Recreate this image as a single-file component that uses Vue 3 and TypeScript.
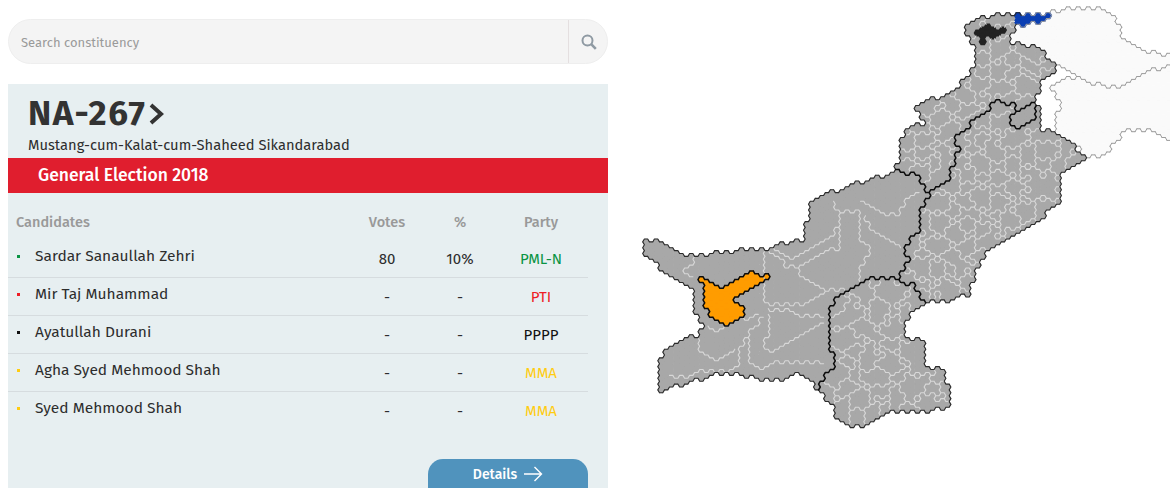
<template>
  <div class="page">
    <section class="left">
      <div class="search">
        <input class="search-input" placeholder="Search constituency" />
        <button class="search-btn" aria-label="Search">
          <svg width="16" height="16" viewBox="0 0 16 16" fill="none" stroke="#8f9aa3" stroke-width="2">
            <circle cx="6.5" cy="6.5" r="5" />
            <path d="M10.2 10.2 14.8 14.8" stroke-width="2.6" />
          </svg>
        </button>
      </div>

      <div class="panel">
        <h1 class="title">
          <span class="code">NA-267</span>
          <svg class="chev" width="15" height="22" viewBox="0 0 15 22" fill="none" stroke="#333" stroke-width="4">
            <path d="M2 2 12 11 2 20" />
          </svg>
        </h1>
        <p class="subtitle">Mustang-cum-Kalat-cum-Shaheed Sikandarabad</p>
        <div class="band">General Election 2018</div>

        <div class="row head">
          <span class="cand">Candidates</span>
          <span>Votes</span>
          <span>%</span>
          <span>Party</span>
        </div>
        <div class="rows">
          <div v-for="c in candidates" :key="c.name" class="row body">
            <span class="cand name">
              <i class="dot" :style="{ background: c.color }"></i>{{ c.name }}
            </span>
            <span>{{ c.votes }}</span>
            <span>{{ c.pct }}</span>
            <span :style="{ color: c.color }">{{ c.party }}</span>
          </div>
        </div>

        <div class="actions">
          <button class="details">
            Details
            <svg width="20" height="16" viewBox="0 0 20 16" fill="none" stroke="#fff" stroke-width="1.4">
              <path d="M1 8H18.5M11.5 1 18.5 8 11.5 15" />
            </svg>
          </button>
        </div>
      </div>
    </section>

    <svg class="map" viewBox="608 0 562 488" width="562" height="488">
      <path v-for="f in map.fills" :key="f.color" :d="f.d" :fill="f.color" :stroke="f.color" :stroke-width="f.sw" />
      <path :d="map.white" class="ln" stroke="#d8d8d8" stroke-width="1.1" />
      <path :d="map.grey" class="ln" stroke="#9c9c9c" stroke-width="1" />
      <path :d="map.dark" class="ln" stroke="#2b2b2b" stroke-width="1.1" />
      <path :d="map.black" class="ln" stroke="#0c0c0c" stroke-width="1.5" />
    </svg>
  </div>
</template>

<script setup lang="ts">
type Pt = [number, number];

const candidates = [
  { name: 'Sardar Sanaullah Zehri', votes: '80', pct: '10%', party: 'PML-N', color: '#0a9444' },
  { name: 'Mir Taj Muhammad', votes: '-', pct: '-', party: 'PTI', color: '#ee1c25' },
  { name: 'Ayatullah Durani', votes: '-', pct: '-', party: 'PPPP', color: '#111111' },
  { name: 'Agha Syed Mehmood Shah', votes: '-', pct: '-', party: 'MMA', color: '#ffcc11' },
  { name: 'Syed Mehmood Shah', votes: '-', pct: '-', party: 'MMA', color: '#ffcc11' },
];

// coarse province shapes in page coordinates, snapped to the hex grid below
const provinces: Pt[][] = [
  [[641,236],[648,238],[687,256],[767,248],[803,240],[807,223],[812,203],[830,193],[857,183],[897,172],[920,173],[923,190],[932,192],[920,213],[920,230],[905,245],[908,262],[898,277],[873,277],[840,293],[827,313],[830,347],[838,360],[817,388],[803,373],[773,382],[747,377],[723,373],[697,380],[660,392],[657,362],[663,352],[700,333],[707,325],[695,315],[693,290],[663,273],[643,250]],
  [[897,172],[898,143],[905,130],[925,123],[915,107],[928,98],[940,102],[953,90],[975,68],[975,47],[963,33],[970,23],[997,13],[1018,13],[1020,23],[1013,30],[1008,42],[1023,43],[1043,52],[1057,67],[1053,75],[1042,83],[1035,100],[1033,102],[1015,110],[1013,103],[997,102],[980,115],[953,140],[960,147],[948,180],[932,192],[923,190],[920,173]],
  [[932,192],[948,180],[960,147],[953,140],[980,115],[997,102],[1013,103],[1015,110],[1008,115],[1008,123],[1017,128],[1035,118],[1033,102],[1040,105],[1042,132],[1050,130],[1073,143],[1085,157],[1063,170],[1063,197],[1052,207],[1040,220],[1010,235],[985,255],[975,275],[970,295],[950,300],[927,303],[913,285],[898,282],[898,277],[908,262],[905,245],[920,230],[920,213]],
  [[1015,110],[1033,102],[1035,118],[1017,128],[1008,123],[1008,115]],
  [[898,277],[898,282],[913,285],[925,303],[905,320],[905,337],[925,342],[925,368],[942,370],[953,397],[952,407],[917,413],[883,413],[863,427],[850,425],[837,417],[830,402],[817,388],[838,360],[830,347],[827,313],[840,293],[873,277]],
  [[1020,23],[1018,13],[1047,13],[1070,7],[1093,7],[1118,20],[1120,40],[1150,52],[1175,55],[1175,63],[1147,72],[1117,88],[1097,85],[1080,75],[1063,65],[1057,67],[1043,52],[1023,43],[1008,42],[1013,30]],
  [[1175,64],[1147,72],[1117,88],[1097,85],[1080,78],[1063,78],[1053,88],[1057,100],[1063,103],[1058,110],[1058,132],[1075,143],[1085,158],[1107,155],[1120,135],[1138,127],[1175,142]],
];
const orange: Pt[] = [[695,275],[720,288],[747,273],[769,276],[758,286],[733,298],[747,315],[725,329],[708,312],[702,300],[702,282]];
const blue: Pt[] = [[1017,9],[1050,9],[1050,19],[1036,22],[1028,27],[1017,27]];
const blackArea: Pt[] = [[974,32],[990,25],[1008,31],[998,36],[988,37],[985,46],[981,46],[978,37]];

// Balochistan seat borders, traced by eye and walked along the hex lattice
const balochLines: Pt[][] = [
  [[695,277],[685,270],[695,258],[713,253]],
  [[763,250],[767,270],[767,303],[777,305],[803,303],[827,287],[850,290]],
  [[767,250],[787,270],[800,267],[843,250],[843,213],[860,210],[863,243],[872,250],[860,270],[853,290]],
  [[800,267],[800,280],[827,287]],
  [[832,200],[838,213],[830,240],[793,260],[767,250]],
  [[860,202],[903,213],[907,200],[920,192]],
  [[867,213],[873,233],[903,245]],
  [[767,310],[787,310],[827,317]],
  [[767,313],[763,343],[762,350],[773,350],[827,323]],
  [[763,317],[757,327],[748,337],[750,367],[770,367],[827,363]],
  [[748,337],[740,350],[740,367],[697,370],[667,377]],
  [[697,340],[700,352],[717,360],[737,348]],
  [[707,327],[720,332],[747,320],[760,317]],
];

const inPoly = (p: Pt, poly: Pt[]) => {
  let hit = false;
  for (let i = 0, j = poly.length - 1; i < poly.length; j = i++) {
    const [xi, yi] = poly[i];
    const [xj, yj] = poly[j];
    if (yi > p[1] !== yj > p[1] && p[0] < ((xj - xi) * (p[1] - yi)) / (yj - yi) + xi) hit = !hit;
  }
  return hit;
};

// small seeded generator so the map is the same on every load
let seed = 267;
const rnd = () => {
  seed = (seed + 0x6d2b79f5) | 0;
  let t = Math.imul(seed ^ (seed >>> 15), 1 | seed);
  t = (t + Math.imul(t ^ (t >>> 7), 61 | t)) ^ t;
  return ((t ^ (t >>> 14)) >>> 0) / 4294967296;
};

interface Cell { r: number; c: number; x: number; y: number; prov: number; region: number; special: string }

const buildMap = () => {
  // flat-top hexes, the outline scallops repeat every two columns
  const S = 3.35;
  const H = S * Math.sqrt(3);
  const DX = S * 1.5;
  const cells = new Map<string, Cell>();
  for (let c = 0; c < 112; c++) {
    for (let r = 0; r < 76; r++) {
      const x = 636 + c * DX;
      const y = 4 + r * H + (c % 2 ? H / 2 : 0);
      const prov = provinces.findIndex((p, i) => i !== 3 && inPoly([x, y], p));
      const isl = inPoly([x, y], provinces[3]);
      if (prov < 0 && !isl) continue;
      let special = '';
      if (inPoly([x, y], orange)) special = '#ff9c00';
      else if (inPoly([x, y], blue)) special = '#0b3fb3';
      else if (inPoly([x, y], blackArea)) special = '#222222';
      cells.set(c + ':' + r, { r, c, x, y, prov: isl ? 3 : prov, region: -1, special });
    }
  }

  // same order as the edges of verts() below
  const nbrs = (cell: Cell): (Cell | undefined)[] => {
    const o = cell.c % 2;
    return [
      [1, o], [0, 1], [-1, o], [-1, o - 1], [0, -1], [1, o - 1],
    ].map(([dc, dr]) => cells.get(cell.c + dc + ':' + (cell.r + dr)));
  };

  const all = [...cells.values()];
  all.filter((c) => c.prov === 0 || c.prov === 3 || c.prov > 4).forEach((c) => { c.region = 900 + c.prov; });

  // seeds sit on a loose lattice: small blobs up north, tall thin seats in Sindh
  let next = 0;
  const open: Cell[] = [];
  all.forEach((c) => {
    const north = (c.prov === 1 || c.prov === 2) && c.c % 3 === 0 && (c.r + (c.c % 6 ? 1 : 0)) % 2 === 0;
    const south = c.prov === 4 && c.c % 2 === 0 && (c.r + (c.c % 4 ? 2 : 0)) % 4 === 0;
    if (north || south) {
      c.region = next++;
      open.push(c);
    }
  });
  while (open.length) {
    const cur = open.splice(Math.floor(rnd() * open.length), 1)[0];
    for (const b of nbrs(cur)) {
      if (b && b.prov === cur.prov && b.region < 0) {
        b.region = cur.region;
        open.push(b);
      }
    }
  }

  const verts = (x: number, y: number): Pt[] => [
    [x + S, y], [x + S / 2, y + H / 2], [x - S / 2, y + H / 2], [x - S, y], [x - S / 2, y - H / 2], [x + S / 2, y - H / 2],
  ];
  const f = (n: number) => n.toFixed(1);
  const hex = (x: number, y: number) =>
    'M' + verts(x, y).map((v) => f(v[0]) + ' ' + f(v[1])).join('L') + 'Z';

  // lattice graph, used to snap the traced Balochistan lines
  const graph = new Map<string, { p: Pt; to: Set<string> }>();
  const vKey = (p: Pt) => Math.round(p[0] * 2) + ',' + Math.round(p[1] * 2);
  for (const cell of all) {
    const vs = verts(cell.x, cell.y);
    vs.forEach((v, i) => {
      const k = vKey(v);
      const k2 = vKey(vs[(i + 1) % 6]);
      if (!graph.has(k)) graph.set(k, { p: v, to: new Set() });
      if (!graph.has(k2)) graph.set(k2, { p: vs[(i + 1) % 6], to: new Set() });
      graph.get(k)!.to.add(k2);
      graph.get(k2)!.to.add(k);
    });
  }
  const nearest = (t: Pt) => {
    let best = '';
    let bd = 1e9;
    graph.forEach((v, k) => {
      const d = Math.hypot(v.p[0] - t[0], v.p[1] - t[1]);
      if (d < bd) { bd = d; best = k; }
    });
    return best;
  };
  const snap = (line: Pt[]) => {
    let cur = nearest(line[0]);
    let d = 'M' + f(graph.get(cur)!.p[0]) + ' ' + f(graph.get(cur)!.p[1]);
    for (const t of line.slice(1)) {
      const seen = new Set([cur]);
      for (let step = 0; step < 80; step++) {
        const node = graph.get(cur)!;
        if (Math.hypot(node.p[0] - t[0], node.p[1] - t[1]) < S * 1.1) break;
        let pick = '';
        let bd = 1e9;
        node.to.forEach((k) => {
          const p = graph.get(k)!.p;
          const dist = Math.hypot(p[0] - t[0], p[1] - t[1]);
          if (!seen.has(k) && dist < bd) { bd = dist; pick = k; }
        });
        if (!pick) break;
        seen.add(pick);
        cur = pick;
        d += 'L' + f(graph.get(cur)!.p[0]) + ' ' + f(graph.get(cur)!.p[1]);
      }
    }
    return d;
  };

  const fills: Record<string, string> = {};
  let white = balochLines.map(snap).join('');
  let grey = '';
  let dark = '';
  let black = '';
  for (const a of all) {
    const color = a.special || (a.prov > 4 ? '#fafafa' : '#a8a8a8');
    fills[color] = (fills[color] || '') + hex(a.x, a.y);
    const vs = verts(a.x, a.y);
    nbrs(a).forEach((b, i) => {
      const v1 = vs[i];
      const v2 = vs[(i + 1) % 6];
      const seg = `M${f(v1[0])} ${f(v1[1])}L${f(v2[0])} ${f(v2[1])}`;
      // shared edges get drawn once, from the cell met first
      if (b && (b.c < a.c || (b.c === a.c && b.r < a.r))) return;
      const kashA = a.prov > 4;
      const kashB = !!b && b.prov > 4;
      if (!b) {
        if (kashA) grey += seg; else if (a.special === '#ff9c00') black += seg; else dark += seg;
      } else if (a.special === '#ff9c00' || b.special === '#ff9c00') {
        if (a.special !== b.special) black += seg;
      } else if (a.special && a.special === b.special) {
        // inside a filled seat, no line
      } else if (a.special || b.special) {
        if (kashA || kashB) grey += seg;
      } else if (kashA || kashB) {
        if (a.prov !== b.prov) { if (kashA && kashB) grey += seg; else dark += seg; }
      } else if (a.prov !== b.prov) {
        black += seg;
      } else if (a.region !== b.region) {
        white += seg;
      }
    });
  }
  return {
    fills: Object.entries(fills).map(([color, d]) => ({ color, d, sw: color === '#0b3fb3' || color === '#222222' ? 1.4 : 0.5 })),
    white, grey, dark, black,
  };
};

const map = buildMap();
</script>

<style scoped>
.page {
  display: flex;
  width: 1170px;
  height: 488px;
  overflow: hidden;
  font-family: "Fira Sans", Roboto, "Liberation Sans", sans-serif;
}
.left {
  width: 600px;
  margin-left: 8px;
  padding-top: 19px;
  flex: none;
}
.search {
  display: flex;
  height: 45px;
  box-sizing: border-box;
  background: #f4f4f4;
  border: 1px solid #eeeeee;
  border-radius: 23px;
  overflow: hidden;
}
.search-input {
  flex: 1;
  border: 0;
  outline: 0;
  background: transparent;
  padding: 1px 12px 0;
  font: 13px "Fira Sans", Roboto, sans-serif;
}
.search-input::placeholder { color: #9a9a9a; opacity: 1; }
.search-btn {
  width: 39px;
  border: 0;
  border-left: 1px solid #e4dfe0;
  background: transparent;
  padding: 0 0 0 1px;
  display: flex;
  align-items: center;
  justify-content: center;
}
.panel {
  margin-top: 20px;
  height: 404px;
  background: #e7eff1;
  color: #2d2d2d;
}
.title {
  margin: 0;
  padding: 10px 0 0 20px;
  height: 38px;
  line-height: 38px;
  font-size: 35px;
  font-weight: 700;
  color: #333;
  display: flex;
  align-items: center;
  gap: 3px;
}
.code { letter-spacing: 1.5px; }
.chev { margin-top: 1px; }
.subtitle {
  margin: 0;
  padding: 3px 0 0 20px;
  height: 23px;
  line-height: 20px;
  font-size: 14.7px;
}
.band {
  height: 35px;
  line-height: 35px;
  padding-left: 30px;
  background: #e01e2e;
  color: #fff;
  font-size: 17.5px;
  font-weight: 500;
}
.row {
  display: grid;
  grid-template-columns: 340px 78px 68px 94px;
  text-align: center;
  font-size: 14.5px;
}
.cand { text-align: left; }
.head {
  height: 47px;
  padding-top: 20px;
  box-sizing: border-box;
  color: #999;
  font-weight: 500;
}
.head .cand { padding-left: 8px; }
.body {
  height: 38px;
  padding-top: 10px;
  box-sizing: border-box;
  border-bottom: 1px solid #d6dcdf;
  width: 580px;
  line-height: 18px;
  font-size: 15px;
}
.body:last-child { border-bottom: 0; }
.name {
  display: flex;
  align-items: center;
  margin-top: -3px;
  align-self: start;
  padding-left: 9px;
  font-size: 15.5px;
}
.dot {
  width: 3px;
  height: 3px;
  margin-right: 15px;
}
.actions {
  display: flex;
  justify-content: flex-end;
  width: 580px;
  margin-top: 29px;
}
.details {
  width: 160px;
  height: 44px;
  border: 0;
  border-radius: 15px;
  background: #5093bd;
  color: #fff;
  font: 500 14px "Fira Sans", Roboto, sans-serif;
  display: flex;
  justify-content: center;
  gap: 6px;
  padding-top: 7px;
}
.map { flex: none; display: block; }
.ln { fill: none; stroke-linecap: round; stroke-linejoin: round; }
</style>
